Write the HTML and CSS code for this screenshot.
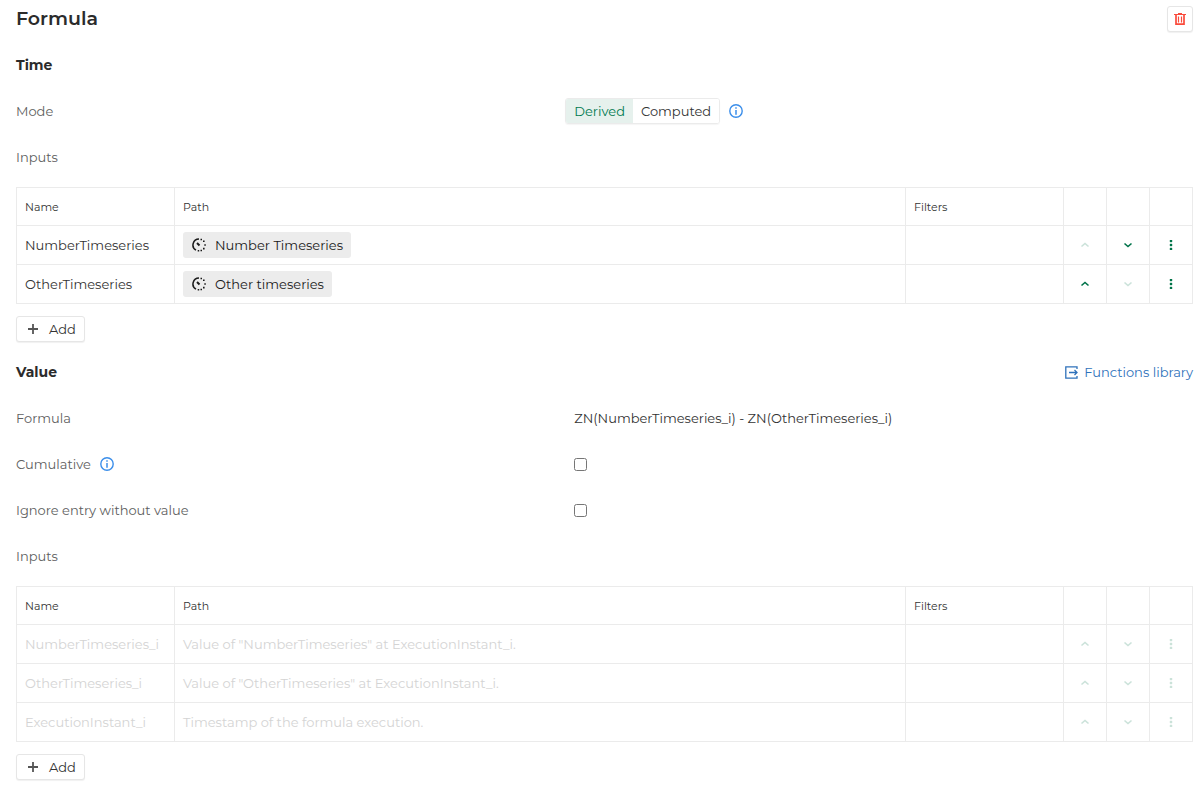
FILE: index.html
```
<!DOCTYPE html>
<html lang="en">

<head>
    <meta charset="UTF-8">
    <meta name="viewport" content="width=device-width, initial-scale=1.0">
    <title>Formula</title>
    <link rel="stylesheet" href="styles.css">
</head>

<body>
    <!-- shared icons -->
    <svg class="sprite" aria-hidden="true">
        <symbol id="up" viewBox="0 0 10 10"><path d="M1.5 6.5 5 3.5l3.5 3" fill="none" stroke="currentColor" stroke-width="1.6"/></symbol>
        <symbol id="down" viewBox="0 0 10 10"><path d="M1.5 3.5 5 6.5l3.5-3" fill="none" stroke="currentColor" stroke-width="1.6"/></symbol>
        <symbol id="dots" viewBox="0 0 10 10"><path d="M4 0h2v2H4zM4 4h2v2H4zM4 8h2v2H4z" fill="currentColor" stroke="currentColor" stroke-width="0.4"/></symbol>
        <symbol id="plus" viewBox="0 0 10 10"><path d="M5 0v10M0 5h10" stroke="currentColor" stroke-width="1.8"/></symbol>
        <symbol id="info" viewBox="0 0 14 14">
            <circle cx="7" cy="7" r="6.2" fill="none" stroke="currentColor" stroke-width="1.4"/>
            <path d="M7 3.2v1.6M7 6v4.7" stroke="currentColor" stroke-width="1.5"/>
        </symbol>
        <symbol id="series" viewBox="0 0 14 14">
            <path d="M7 1A6 6 0 0 0 4 12.2" fill="none" stroke="currentColor" stroke-width="1.5"/>
            <path d="M5 5l2.500 2.500" stroke="currentColor" stroke-width="1.9"/>
            <path d="M8.5.7H10v1.5H8.5zM11 2.5h1.6v1.6H11zM12.3 6.2h1.5v1.5h-1.5zM11 9.8h1.6v1.6H11zM8.5 11.8H10v1.5H8.5zM5.7 12h1.5v1.5H5.7z" fill="currentColor"/>
        </symbol>
    </svg>

    <main class="container">
        <header class="header">
            <h1 class="heading">Formula</h1>
            <button type="button" class="btn delete-btn" aria-label="Delete formula">
                <svg width="12" height="12" viewBox="0 0 12 12" fill="none" stroke="currentColor">
                    <path d="M0 1.5h12M4 .5h4" stroke-width="1"/>
                    <path d="M2 2v9.2h8V2" stroke-width="1.7"/>
                    <path d="M4.5 3.5v6M7.5 3.5v6" stroke-width="1.2"/>
                </svg>
            </button>
        </header>

        <section>
            <div class="row">
                <h2 class="title">Time</h2>
            </div>
            <div class="row field">
                <span class="label" id="modeLabel">Mode</span>
                <div class="value">
                    <div class="switch" role="group" aria-labelledby="modeLabel">
                        <button type="button" class="active" aria-pressed="true">Derived</button>
                        <button type="button" aria-pressed="false">Computed</button>
                    </div>
                    <svg class="info"><use href="#info"/></svg>
                </div>
            </div>
            <div class="row">
                <h3 class="label">Inputs</h3>
            </div>
            <table class="inputs">
                <thead>
                    <tr>
                        <th class="name-col">Name</th>
                        <th>Path</th>
                        <th class="filter-col">Filters</th>
                        <th class="icon-col"></th>
                        <th class="icon-col"></th>
                        <th class="icon-col"></th>
                    </tr>
                </thead>
                <tbody>
                    <tr>
                        <td>NumberTimeseries</td>
                        <td><span class="chip"><svg><use href="#series"/></svg>Number Timeseries</span></td>
                        <td></td>
                        <td><button type="button" class="icon-btn" aria-label="Move up" disabled><svg><use href="#up"/></svg></button></td>
                        <td><button type="button" class="icon-btn" aria-label="Move down"><svg><use href="#down"/></svg></button></td>
                        <td><button type="button" class="icon-btn" aria-label="More"><svg><use href="#dots"/></svg></button></td>
                    </tr>
                    <tr>
                        <td>OtherTimeseries</td>
                        <td><span class="chip"><svg><use href="#series"/></svg>Other timeseries</span></td>
                        <td></td>
                        <td><button type="button" class="icon-btn" aria-label="Move up"><svg><use href="#up"/></svg></button></td>
                        <td><button type="button" class="icon-btn" aria-label="Move down" disabled><svg><use href="#down"/></svg></button></td>
                        <td><button type="button" class="icon-btn" aria-label="More"><svg><use href="#dots"/></svg></button></td>
                    </tr>
                </tbody>
            </table>
            <button type="button" class="btn add-btn"><svg><use href="#plus"/></svg>Add</button>
        </section>

        <section class="value-section">
            <div class="row">
                <h2 class="title">Value</h2>
                <a href="#" class="library">
                    <svg width="13" height="13" viewBox="0 0 13 13" fill="none" stroke="currentColor" stroke-width="1.3">
                        <path d="M12 3V.8H.8v11.400H12V10"/>
                        <path d="M4 6.500h8M9.500 4 12 6.500 9.500 9"/>
                    </svg>
                    Functions library
                </a>
            </div>
            <div class="row field">
                <label class="label" for="formula">Formula</label>
                <div class="value">
                    <input type="text" class="formula" id="formula" value="ZN(NumberTimeseries_i) - ZN(OtherTimeseries_i)">
                </div>
            </div>
            <div class="row field">
                <div class="label-group">
                    <label class="label" for="cumulative">Cumulative</label>
                    <svg class="info"><use href="#info"/></svg>
                </div>
                <div class="value">
                    <input type="checkbox" class="check" id="cumulative">
                </div>
            </div>
            <div class="row field">
                <label class="label" for="ignore">Ignore entry without value</label>
                <div class="value">
                    <input type="checkbox" class="check" id="ignore">
                </div>
            </div>
            <div class="row">
                <h3 class="label">Inputs</h3>
            </div>
            <table class="inputs readonly">
                <thead>
                    <tr>
                        <th class="name-col">Name</th>
                        <th>Path</th>
                        <th class="filter-col">Filters</th>
                        <th class="icon-col"></th>
                        <th class="icon-col"></th>
                        <th class="icon-col"></th>
                    </tr>
                </thead>
                <tbody>
                    <tr>
                        <td>NumberTimeseries_i</td>
                        <td>Value of "NumberTimeseries" at ExecutionInstant_i.</td>
                        <td></td>
                        <td><button type="button" class="icon-btn" aria-label="Move up" disabled><svg><use href="#up"/></svg></button></td>
                        <td><button type="button" class="icon-btn" aria-label="Move down" disabled><svg><use href="#down"/></svg></button></td>
                        <td><button type="button" class="icon-btn" aria-label="More" disabled><svg><use href="#dots"/></svg></button></td>
                    </tr>
                    <tr>
                        <td>OtherTimeseries_i</td>
                        <td>Value of "OtherTimeseries" at ExecutionInstant_i.</td>
                        <td></td>
                        <td><button type="button" class="icon-btn" aria-label="Move up" disabled><svg><use href="#up"/></svg></button></td>
                        <td><button type="button" class="icon-btn" aria-label="Move down" disabled><svg><use href="#down"/></svg></button></td>
                        <td><button type="button" class="icon-btn" aria-label="More" disabled><svg><use href="#dots"/></svg></button></td>
                    </tr>
                    <tr>
                        <td>ExecutionInstant_i</td>
                        <td>Timestamp of the formula execution.</td>
                        <td></td>
                        <td><button type="button" class="icon-btn" aria-label="Move up" disabled><svg><use href="#up"/></svg></button></td>
                        <td><button type="button" class="icon-btn" aria-label="Move down" disabled><svg><use href="#down"/></svg></button></td>
                        <td><button type="button" class="icon-btn" aria-label="More" disabled><svg><use href="#dots"/></svg></button></td>
                    </tr>
                </tbody>
            </table>
            <button type="button" class="btn add-btn"><svg><use href="#plus"/></svg>Add</button>
        </section>
    </main>
</body>

</html>
```
FILE: styles.css
```
* {
    margin: 0;
    padding: 0;
    box-sizing: border-box;
}

body {
    background: #fff;
    color: #333;
    font-family: Montserrat, Inter, sans-serif;
    font-size: 13px;
    line-height: 18px;
}

button, input {
    font: inherit;
    color: inherit;
}
button{
    cursor: pointer;
}
svg{
    flex: none;
}
.sprite{
    display: none;
}
.container{
    padding: 0 10px 12px 16px;
}
.header{
    display: flex;
    align-items: center;
    justify-content: space-between;
    height: 38px;
    margin-bottom: 4px;
}
.heading{
    font-size: 19px;
    line-height: 28px;
    font-weight: 600;
    color: #2b2b2b;
}
.row{
    display: flex;
    align-items: center;
    justify-content: space-between;
    min-height: 46px;
}
.field{
    display: grid;
    grid-template-columns: 7fr 8fr;
}
.title{
    font-size: 14px;
    font-weight: 700;
    color: #2b2b2b;
}
.label{
    font-size: 13px;
    font-weight: 400;
    color: #606060;
}
.label-group, .value{
    display: flex;
    align-items: center;
    gap: 9px;
}
.info{
    width: 14px;
    height: 14px;
    color: #3b8eea;
}

/* buttons */
.btn{
    display: inline-flex;
    align-items: center;
    justify-content: center;
    height: 26px;
    border: 1px solid #e6e6e6;
    border-radius: 3px;
    background: #fff;
    box-shadow: 0 1px 1px rgba(0, 0, 0, 0.06);
}
.delete-btn{
    width: 26px;
    color: #fa4b3c;
}
.add-btn{
    gap: 11px;
    margin-top: 12px;
    padding: 0 8px 0 11px;
}
.add-btn svg{
    width: 10px;
    height: 10px;
    color: #555;
}
.switch{
    display: flex;
    height: 26px;
    border: 1px solid #ebebeb;
    border-radius: 3px;
    overflow: hidden;
    box-shadow: 0 1px 1px rgba(0, 0, 0, 0.04);
}
.switch button{
    border: none;
    padding: 0 8px;
    background: #fff;
}
.switch .active{
    background: #e6f1ed;
    color: #007a50;
}

/* inputs tables */
.inputs{
    width: 100%;
    margin-top: 7px;
    border-collapse: collapse;
    table-layout: fixed;
}
.inputs th, .inputs td{
    height: 39px;
    padding: 0 8px;
    border: 1px solid #ebebeb;
    text-align: left;
    vertical-align: middle;
}
.inputs th{
    height: 38px;
    font-size: 11px;
    font-weight: 400;
}
.name-col, .filter-col{
    width: 158px;
}
.icon-col{
    width: 43px;
}
.readonly td{
    color: #d4d4d4;
}
.chip{
    display: flex;
    align-items: center;
    width: fit-content;
    height: 26px;
    gap: 9px;
    padding: 0 8px 0 9px;
    border-radius: 3px;
    background: #ececec;
    color: #1a1a1a;
}
.chip svg{
    width: 14px;
    height: 14px;
}
.inputs .icon-btn{
    display: flex;
    align-items: center;
    justify-content: center;
    width: 100%;
    height: 26px;
    border: none;
    background: none;
    color: #00734a;
}
.icon-btn svg{
    width: 10px;
    height: 10px;
}
.icon-btn:disabled{
    opacity: 0.2;
    cursor: default;
}

.value-section{
    margin-top: 7px;
}
.library{
    display: flex;
    align-items: center;
    gap: 6px;
    color: #2f72bb;
    text-decoration: none;
}
.library:hover{
    text-decoration: underline;
}
.formula{
    width: 100%;
    height: 26px;
    padding: 0 8px;
    border: 1px solid transparent;
    background: none;
    outline: none;
}
.formula:focus{
    border-color: #ebebeb;
}
.check{
    width: 13px;
    height: 13px;
    margin-left: 9px;
}
```
